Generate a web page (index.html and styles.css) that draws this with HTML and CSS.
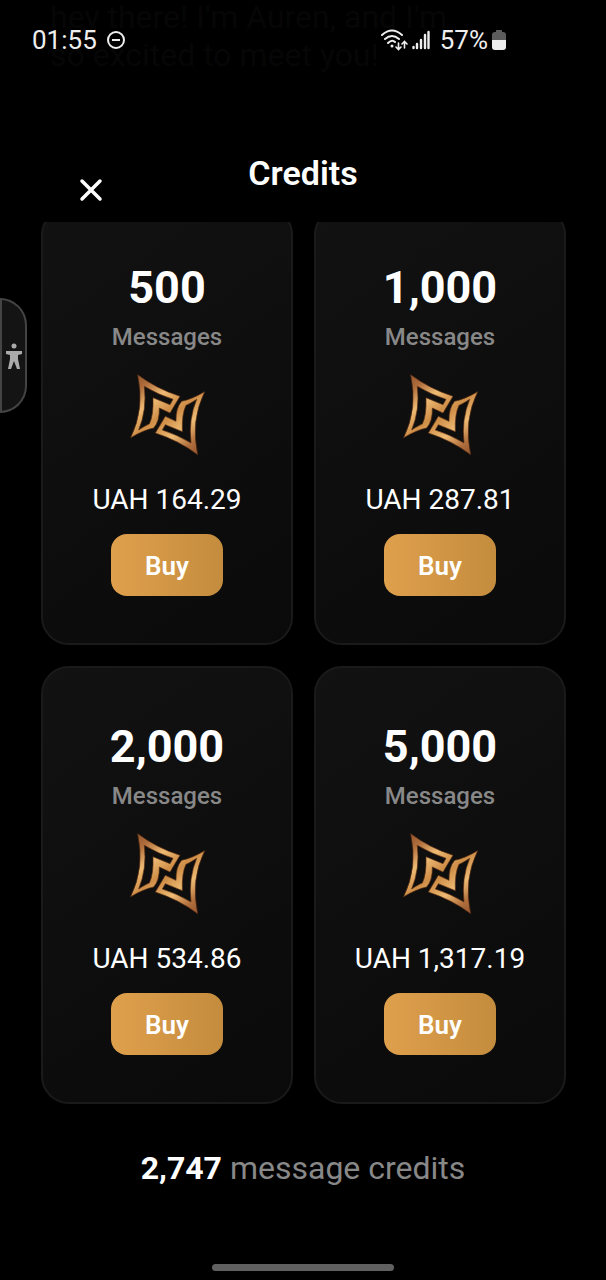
FILE: index.html
```html
<!DOCTYPE html>
<html lang="en">
<head>
    <meta charset="UTF-8">
    <meta name="viewport" content="width=device-width, initial-scale=1.0">
    <title>Credits</title>
    <link rel="stylesheet" href="styles.css">
</head>
<body>
    <!-- Shared coin emblem -->
    <svg class="defs" width="0" height="0" aria-hidden="true">
        <defs>
            <linearGradient id="gold" x1="0" y1="0" x2="0.6" y2="1">
                <stop offset="0" stop-color="#8a4e2c"/>
                <stop offset="0.25" stop-color="#b06e3c"/>
                <stop offset="0.5" stop-color="#eebb74"/>
                <stop offset="0.75" stop-color="#cf8e48"/>
                <stop offset="1" stop-color="#e8b872"/>
            </linearGradient>
            <symbol id="emblem" viewBox="0 0 240 258">
                <g id="blade" fill="url(#gold)" fill-rule="evenodd" stroke="#5a2f14" stroke-width="2">
                    <path d="M32 8 Q88 50 159 73 L129 123 L97 108 Q98 148 80 168 Q50 174 11 197 Q54 110 32 8Z M52 43 Q60 115 35 174 Q56 160 67 156 Q80 130 78 77 L129 98 L138 82 Q94 68 52 43Z"/>
                </g>
                <use href="#blade" transform="rotate(180 122 128)"/>
            </symbol>
        </defs>
    </svg>

    <div class="screen">
        <header class="status-bar">
            <p class="chat-behind">hey there! I'm Auren, and I'm<br>so excited to meet you!</p>
            <div class="status-group">
                <span>01:55</span>
                <svg class="dnd" viewBox="0 0 20 20" fill="none" stroke="#eee" stroke-width="2">
                    <circle cx="10" cy="10" r="8"/>
                    <path d="M6 10h8"/>
                </svg>
            </div>
            <div class="status-group status-right">
                <svg class="wifi" viewBox="0 0 28 22" fill="none" stroke="#eee" stroke-width="2" stroke-linecap="round">
                    <path d="M2 6Q12 -3 22 6M5 10Q12 4 19 10M8 14Q12 10 15 13"/>
                    <circle cx="12" cy="17" r="1.5" fill="#eee" stroke="none"/>
                    <path stroke-width="1.6" d="M18.500 14v6M16 18l2.500 2.500 2.500-2.500M24.500 19v-6M22 15l2.500-2.500 2.500 2.500"/>
                </svg>
                <svg class="signal" viewBox="0 0 18 20" fill="none" stroke="#eee" stroke-width="2.400" stroke-linecap="round">
                    <path d="M1.500 17v1M5 14v4M9 10v8M13 5v13M16.500 2v16"/>
                </svg>
                <span>57%</span>
                <svg class="battery" viewBox="0 0 14 20">
                    <path d="M4 0h6v2h1q3 0 3 3v5H0V5q0-3 3-3h1z" fill="#5c5c5c"/>
                    <path d="M0 10h14v7q0 3-3 3H3q-3 0-3-3z" fill="#eee"/>
                </svg>
            </div>
        </header>

        <div class="title-bar">
            <button class="close" aria-label="Close">
                <svg viewBox="0 0 24 24" fill="none" stroke="#fff" stroke-width="3.500" stroke-linecap="round">
                    <path d="M3 3l18 18M21 3L3 21"/>
                </svg>
            </button>
            <h1>Credits</h1>
        </div>

        <main class="packs">
            <section class="card">
                <h2>500</h2>
                <p class="unit">Messages</p>
                <svg class="emblem" aria-hidden="true"><use href="#emblem"/></svg>
                <p class="price">UAH 164.29</p>
                <button class="buy">Buy</button>
            </section>
            <section class="card">
                <h2>1,000</h2>
                <p class="unit">Messages</p>
                <svg class="emblem" aria-hidden="true"><use href="#emblem"/></svg>
                <p class="price">UAH 287.81</p>
                <button class="buy">Buy</button>
            </section>
            <section class="card">
                <h2>2,000</h2>
                <p class="unit">Messages</p>
                <svg class="emblem" aria-hidden="true"><use href="#emblem"/></svg>
                <p class="price">UAH 534.86</p>
                <button class="buy">Buy</button>
            </section>
            <section class="card">
                <h2>5,000</h2>
                <p class="unit">Messages</p>
                <svg class="emblem" aria-hidden="true"><use href="#emblem"/></svg>
                <p class="price">UAH 1,317.19</p>
                <button class="buy">Buy</button>
            </section>
        </main>

        <p class="balance"><strong>2,747</strong> message credits</p>
        <div class="home-bar"></div>
    </div>

    <!-- Accessibility tab on the left edge -->
    <button class="access-tab" aria-label="Accessibility">
        <svg viewBox="0 0 16 26" fill="#aaa">
            <circle cx="8" cy="3" r="2.500"/>
            <path d="M0 8h16v3l-4 1v4l2 10h-3l-3-8-3 8H2l2-10v-4L0 11z"/>
        </svg>
    </button>
</body>
</html>
```
FILE: styles.css
```css
* {
    box-sizing: border-box;
}
body {
    margin: 0;
    background-color: #000;
    color: #fff;
    font-family: Roboto, "Noto Sans", sans-serif;
}
h1, h2, p {
    margin: 0;
}
button {
    font-family: inherit;
    border: none;
    padding: 0;
    cursor: pointer;
}
.defs {
    position: absolute;
}
.screen {
    display: flex;
    flex-direction: column;
    min-height: 100vh;
}
/* Status bar */
.status-bar {
    position: relative;
    display: flex;
    justify-content: space-between;
    align-items: center;
    height: 80px;
    padding: 0 100px 0 32px;
    color: #eee;
    font-size: 26px;
}
.chat-behind {
    position: absolute;
    top: -2px;
    left: 50px;
    color: #060606;
    font-size: 32px;
    line-height: 38px;
}
.status-group {
    position: relative;
    display: flex;
    align-items: center;
    gap: 9px;
}
.status-right {
    gap: 4px;
}
.dnd {
    width: 20px;
    height: 20px;
}
.wifi {
    width: 28px;
    height: 22px;
}
.signal {
    width: 18px;
    height: 20px;
    margin-right: 6px;
}
.battery {
    width: 14px;
    height: 20px;
}
/* Title */
.title-bar {
    display: grid;
    grid-template-columns: 1fr auto 1fr;
    height: 142px;
    padding: 73px 40px 0;
}
h1 {
    font-size: 34px;
    font-weight: 600;
    line-height: 40px;
}
.close {
    width: 24px;
    height: 24px;
    margin: 25px 0 0 39px;
    background: none;
}
.close svg {
    display: block;
}
/* Credit packs, scrolled a little under the title */
.packs {
    display: grid;
    grid-template-columns: 1fr 1fr;
    gap: 21px;
    padding: 0 40px 0 41px;
    overflow: hidden;
}
.card {
    display: flex;
    flex-direction: column;
    align-items: center;
    padding: 52px 0 47px;
    border: 2px solid #1a1a1a;
    border-radius: 28px;
    background: linear-gradient(145deg, #121212, #0a0a0a);
}
.card:nth-child(-n+2) {
    margin-top: -15px;
}
h2 {
    font-size: 45px;
    font-weight: 700;
    line-height: 54px;
}
.unit {
    margin-top: 8px;
    color: #888;
    font-size: 24px;
    font-weight: 500;
    line-height: 28px;
}
.emblem {
    width: 80px;
    height: 86px;
    margin-top: 21px;
}
.price {
    margin-top: 25px;
    font-size: 28px;
    line-height: 34px;
}
.buy {
    width: 112px;
    height: 62px;
    margin-top: 17px;
    padding-top: 2px;
    border-radius: 16px;
    background: linear-gradient(90deg, #dfa04c, #c48c3e);
    color: #fff;
    font-size: 26px;
    font-weight: 600;
}
/* Footer */
.balance {
    margin-top: 44px;
    color: #888;
    font-size: 32px;
    line-height: 40px;
    text-align: center;
}
.balance strong {
    color: #fff;
    font-weight: 700;
}
.home-bar {
    width: 30%;
    height: 7px;
    margin: auto auto 9px;
    border-radius: 4px;
    background-color: #606060;
}
/* Accessibility tab */
.access-tab {
    position: fixed;
    top: 298px;
    left: 0;
    display: flex;
    align-items: center;
    justify-content: center;
    width: 27px;
    height: 115px;
    border: 2px solid #444;
    border-radius: 0 27px 27px 0;
    background-color: #141414;
}
.access-tab svg {
    flex: none;
    width: 16px;
    height: 26px;
}
```
